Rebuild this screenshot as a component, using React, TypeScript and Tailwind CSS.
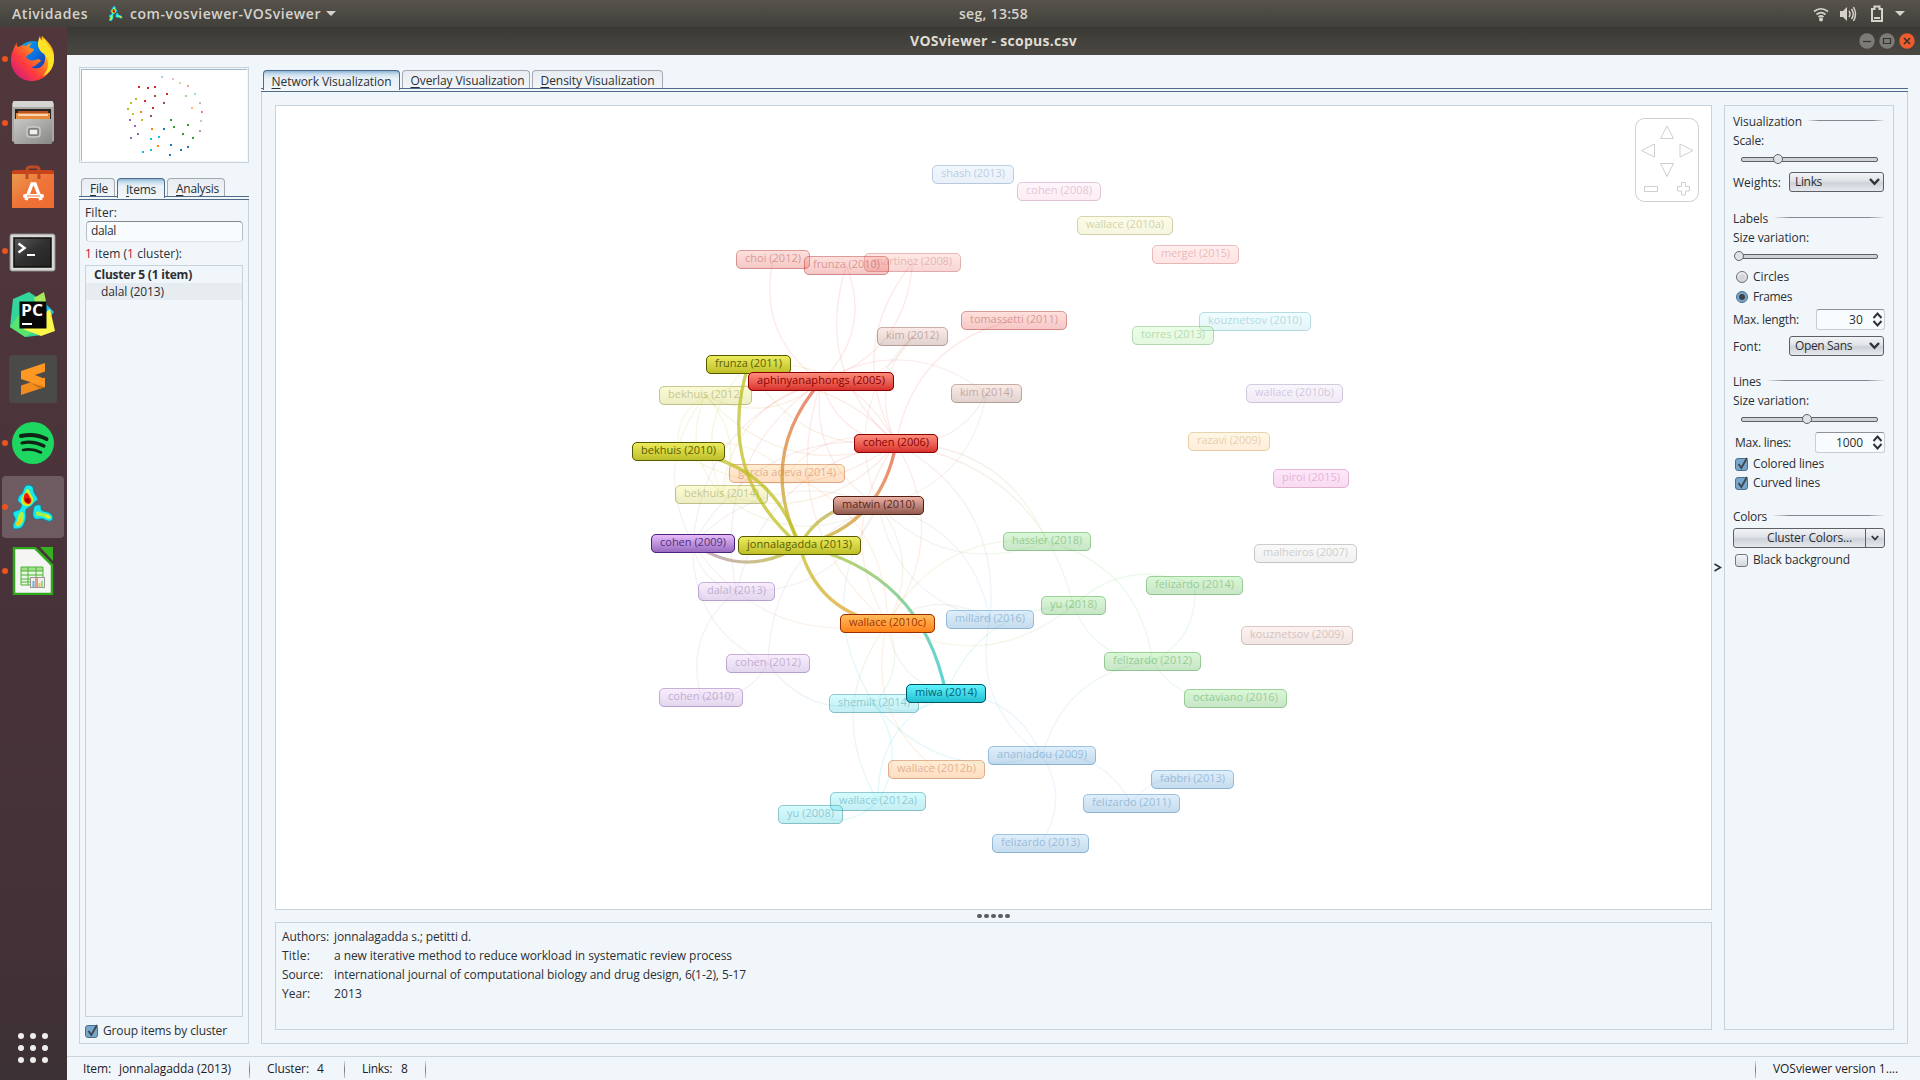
import React, { useLayoutEffect, useRef } from "react";

/* Text whose tracking is adjusted so that it fills a given width. */
function Fit({ w, className = "", children }: { w: number; className?: string; children: React.ReactNode }) {
  const ref = useRef<HTMLSpanElement>(null);
  useLayoutEffect(() => {
    const el = ref.current;
    if (!el) return;
    el.style.letterSpacing = "0px";
    const n = (el.textContent || "").length;
    const natural = el.getBoundingClientRect().width;
    if (n > 0) el.style.letterSpacing = `${(w - natural) / n}px`;
  }, [w, children]);
  return (
    <span ref={ref} className={`inline-block shrink-0 whitespace-pre ${className}`}>
      {children}
    </span>
  );
}

type Tone = { fill: string; ink: string; hex: string; line: string };
const T: Record<string, Tone> = {
  red: { fill: "from-[#ff9080] to-[#d62728]", ink: "text-[#8b0000] border-[#8b0000]", hex: "#d62728", line: "#ec5a48" },
  yellow: { fill: "from-[#efee60] to-[#bcbd22]", ink: "text-[#5a5f00] border-[#565a00]", hex: "#bcbd22", line: "#bfc022" },
  brown: { fill: "from-[#f2b8aa] to-[#8c564b]", ink: "text-[#58261c] border-[#4f2018]", hex: "#8c564b", line: "#c09a7c" },
  purple: { fill: "from-[#ecc0fc] to-[#9467bd]", ink: "text-[#53307c] border-[#4c2480]", hex: "#9467bd", line: "#b48cc8" },
  orange: { fill: "from-[#ffbe5c] to-[#ff7f0e]", ink: "text-[#a03400] border-[#9a2e00]", hex: "#ff7f0e", line: "#f09a30" },
  cyan: { fill: "from-[#62f6ff] to-[#17becf]", ink: "text-[#006375] border-[#005364]", hex: "#17becf", line: "#22c8d4" },
  green: { fill: "from-[#79e46a] to-[#2ca02c]", ink: "text-[#0e7a10] border-[#0e7a10]", hex: "#2ca02c", line: "#70d868" },
  blue: { fill: "from-[#89c7f8] to-[#1f77b4]", ink: "text-[#0b5a9a] border-[#0b5a9a]", hex: "#1f77b4", line: "#78b4ec" },
  lblue: { fill: "from-[#c8e6f8] to-[#aec7e8]", ink: "text-[#5070a0] border-[#4a6c9c]", hex: "#aec7e8", line: "#aec7e8" },
  lpink: { fill: "from-[#ffdff5] to-[#f7b6d2]", ink: "text-[#a0608a] border-[#a0608a]", hex: "#f7b6d2", line: "#f7b6d2" },
  lyellow: { fill: "from-[#f4f4aa] to-[#dbdb8d]", ink: "text-[#7c7c28] border-[#7c7c28]", hex: "#dbdb8d", line: "#dbdb8d" },
  lred: { fill: "from-[#ffc4c0] to-[#ff9896]", ink: "text-[#b05050] border-[#b05050]", hex: "#ff9896", line: "#ff9896" },
  lcyan: { fill: "from-[#c4fbff] to-[#9edae5]", ink: "text-[#3a90a0] border-[#3a90a0]", hex: "#9edae5", line: "#9edae5" },
  lgreen: { fill: "from-[#b8ffa8] to-[#98df8a]", ink: "text-[#3e903a] border-[#3e903a]", hex: "#98df8a", line: "#98df8a" },
  lpurple: { fill: "from-[#ece0fc] to-[#c5b0d5]", ink: "text-[#7d68a0] border-[#7d68a0]", hex: "#c5b0d5", line: "#c5b0d5" },
  lorange: { fill: "from-[#ffe0a0] to-[#ffbb78]", ink: "text-[#b08030] border-[#b08030]", hex: "#ffbb78", line: "#ffbb78" },
  pink: { fill: "from-[#ffa8f4] to-[#e377c2]", ink: "text-[#b04a90] border-[#b04a90]", hex: "#e377c2", line: "#e377c2" },
  gray: { fill: "from-[#ececec] to-[#c7c7c7]", ink: "text-[#707070] border-[#606060]", hex: "#c7c7c7", line: "#c7c7c7" },
  lbrown: { fill: "from-[#fcd4cc] to-[#c49c94]", ink: "text-[#8c6058] border-[#8c6058]", hex: "#c49c94", line: "#c49c94" },
};

type Node = { id: string; x: number; y: number; w: number; tone: string; on?: boolean; dim?: boolean };
const nodes: Node[] = [
  { id: "shash (2013)", x: 932, y: 165, w: 82, tone: "lblue" },
  { id: "cohen (2008)", x: 1017, y: 182, w: 84, tone: "lpink" },
  { id: "wallace (2010a)", x: 1077, y: 216, w: 96, tone: "lyellow" },
  { id: "mergel (2015)", x: 1152, y: 245, w: 87, tone: "lred" },
  { id: "martinez (2008)", x: 864, y: 253, w: 97, tone: "red", dim: true },
  { id: "choi (2012)", x: 736, y: 250, w: 74, tone: "red" },
  { id: "frunza (2010)", x: 804, y: 256, w: 85, tone: "red" },
  { id: "tomassetti (2011)", x: 961, y: 311, w: 106, tone: "red" },
  { id: "kouznetsov (2010)", x: 1199, y: 312, w: 112, tone: "lcyan" },
  { id: "torres (2013)", x: 1132, y: 326, w: 82, tone: "lgreen" },
  { id: "kim (2012)", x: 877, y: 327, w: 71, tone: "brown" },
  { id: "kim (2014)", x: 951, y: 384, w: 71, tone: "brown" },
  { id: "wallace (2010b)", x: 1246, y: 384, w: 97, tone: "lpurple" },
  { id: "bekhuis (2012)", x: 659, y: 386, w: 93, tone: "yellow" },
  { id: "razavi (2009)", x: 1188, y: 432, w: 82, tone: "lorange" },
  { id: "piroi (2015)", x: 1273, y: 469, w: 76, tone: "pink" },
  { id: "garcía adeva (2014)", x: 729, y: 464, w: 116, tone: "orange" },
  { id: "bekhuis (2014)", x: 675, y: 485, w: 93, tone: "yellow" },
  { id: "dalal (2013)", x: 698, y: 582, w: 77, tone: "purple" },
  { id: "cohen (2012)", x: 726, y: 654, w: 84, tone: "purple" },
  { id: "cohen (2010)", x: 659, y: 688, w: 84, tone: "purple" },
  { id: "shemilt (2014)", x: 829, y: 694, w: 90, tone: "cyan" },
  { id: "wallace (2012b)", x: 888, y: 760, w: 97, tone: "orange" },
  { id: "wallace (2012a)", x: 830, y: 792, w: 96, tone: "cyan" },
  { id: "yu (2008)", x: 778, y: 805, w: 65, tone: "cyan" },
  { id: "ananiadou (2009)", x: 988, y: 746, w: 108, tone: "blue" },
  { id: "fabbri (2013)", x: 1151, y: 770, w: 83, tone: "blue" },
  { id: "felizardo (2011)", x: 1083, y: 794, w: 97, tone: "blue" },
  { id: "felizardo (2013)", x: 992, y: 834, w: 97, tone: "blue" },
  { id: "felizardo (2012)", x: 1104, y: 652, w: 97, tone: "green" },
  { id: "octaviano (2016)", x: 1184, y: 689, w: 103, tone: "green" },
  { id: "hassler (2018)", x: 1003, y: 532, w: 88, tone: "green" },
  { id: "felizardo (2014)", x: 1146, y: 576, w: 97, tone: "green" },
  { id: "yu (2018)", x: 1041, y: 596, w: 65, tone: "green" },
  { id: "millard (2016)", x: 946, y: 610, w: 88, tone: "blue" },
  { id: "malheiros (2007)", x: 1254, y: 544, w: 103, tone: "gray" },
  { id: "kouznetsov (2009)", x: 1241, y: 626, w: 112, tone: "lbrown" },
  { id: "frunza (2011)", x: 706, y: 355, w: 85, tone: "yellow", on: true },
  { id: "aphinyanaphongs (2005)", x: 748, y: 372, w: 146, tone: "red", on: true },
  { id: "cohen (2006)", x: 854, y: 434, w: 84, tone: "red", on: true },
  { id: "bekhuis (2010)", x: 632, y: 442, w: 93, tone: "yellow", on: true },
  { id: "matwin (2010)", x: 833, y: 496, w: 91, tone: "brown", on: true },
  { id: "cohen (2009)", x: 651, y: 534, w: 84, tone: "purple", on: true },
  { id: "jonnalagadda (2013)", x: 738, y: 536, w: 123, tone: "yellow", on: true },
  { id: "wallace (2010c)", x: 840, y: 614, w: 95, tone: "orange", on: true },
  { id: "miwa (2014)", x: 906, y: 684, w: 80, tone: "cyan", on: true },
];

const find = (k: string) => nodes.find((n) => n.id.replace(/[ ()]/g, "").startsWith(k))!;

/* Every edge bends to the left of its direction of travel. */
const strong: [string, string][] = [
  ["jonna", "miwa"], ["jonna", "aphin"], ["cohen2006", "jonna"], ["jonna", "frunza2011"],
  ["bekhuis2010", "jonna"], ["jonna", "matwin"], ["jonna", "cohen2009"], ["wallace2010c", "jonna"],
];
const faint: [string, string][] = [
  ["aphin", "choi"], ["frunza2010", "aphin"], ["cohen2006", "frunza2010"], ["martinez", "aphin"],
  ["cohen2006", "martinez"], ["kim2012", "aphin"], ["matwin", "kim2012"], ["cohen2006", "kim2012"],
  ["cohen2006", "tomass"], ["aphin", "kim2014"], ["kim2014", "matwin"], ["kim2014", "cohen2006"],
  ["cohen2006", "aphin"], ["matwin", "aphin"], ["cohen2009", "aphin"], ["dalal", "aphin"],
  ["wallace2010c", "aphin"], ["cohen2006", "yu2018"], ["cohen2006", "hassler"], ["hassler", "matwin"],
  ["wallace2010c", "hassler"], ["yu2018", "wallace2010c"], ["miwa", "yu2018"], ["wallace2010c", "millard"],
  ["millard", "matwin"], ["cohen2006", "millard"], ["ananiadou", "millard"], ["matwin", "millard"],
  ["miwa", "ananiadou"], ["ananiadou", "shemilt"], ["ananiadou", "felizardo2012"], ["ananiadou", "felizardo2013"],
  ["ananiadou", "felizardo2011"], ["felizardo2011", "fabbri"], ["octaviano", "felizardo2012"],
  ["felizardo2014", "felizardo2012"], ["yu2018", "felizardo2014"], ["felizardo2012", "yu2018"],
  ["hassler", "felizardo2012"], ["shemilt", "wallace2012a"], ["wallace2012a", "miwa"],
  ["wallace2012a", "wallace2010c"], ["wallace2012a", "yu2008"], ["miwa", "shemilt"],
  ["wallace2010c", "shemilt"], ["miwa", "wallace2010c"], ["wallace2012b", "wallace2010c"],
  ["shemilt", "matwin"], ["shemilt", "cohen2012"], ["cohen2012", "cohen2010"], ["cohen2012", "cohen2009"],
  ["cohen2012", "matwin"], ["cohen2010", "dalal"], ["wallace2010c", "cohen2009"], ["matwin", "dalal"],
  ["dalal", "cohen2009"], ["cohen2009", "matwin"], ["cohen2009", "cohen2006"], ["dalal", "cohen2006"],
  ["bekhuis2014", "bekhuis2012"], ["bekhuis2012", "bekhuis2014"], ["bekhuis2010", "bekhuis2012"],
  ["aphin", "bekhuis2012"], ["bekhuis2012", "cohen2006"], ["cohen2006", "bekhuis2012"],
  ["bekhuis2014", "aphin"], ["cohen2006", "bekhuis2014"], ["garcía", "cohen2006"], ["cohen2006", "bekhuis2010"],
  ["frunza2011", "cohen2006"], ["cohen2006", "frunza2011"], ["matwin", "bekhuis2014"], ["cohen2009", "bekhuis2012"],
  ["bekhuis2014", "frunza2011"], ["garcía", "wallace2010c"], ["cohen2006", "wallace2010c"],
  ["matwin", "wallace2010c"], ["bekhuis2010", "garcía"], ["wallace2010c", "cohen2006"],
];

function edgePath(a: Node, b: Node) {
  const ax = a.x + a.w / 2, ay = a.y + 9.5, bx = b.x + b.w / 2, by = b.y + 9.5;
  const cx = (ax + bx) / 2 + (by - ay) * 0.33, cy = (ay + by) / 2 - (bx - ax) * 0.33;
  return { ax, ay, bx, by, d: `M${ax} ${ay}Q${cx} ${cy} ${bx} ${by}` };
}

function Edges({ list, name, width, opacity }: { list: [string, string][]; name: string; width: number; opacity: number }) {
  return (
    <svg className="absolute inset-0" width="1920" height="1080" fill="none">
      {list.map(([s, t], i) => {
        const a = find(s), b = find(t);
        const e = edgePath(a, b);
        return (
          <g key={i}>
            <linearGradient id={name + i} gradientUnits="userSpaceOnUse" x1={e.ax} y1={e.ay} x2={e.bx} y2={e.by}>
              <stop offset="0" stopColor={T[a.tone].line} />
              <stop offset="1" stopColor={T[b.tone].line} />
            </linearGradient>
            <path d={e.d} stroke={`url(#${name + i})`} strokeWidth={width} opacity={opacity} />
          </g>
        );
      })}
    </svg>
  );
}

function NodeBox({ n }: { n: Node }) {
  const t = T[n.tone];
  const fo = n.on ? "opacity-100" : n.dim ? "opacity-[0.2]" : "opacity-[0.27]";
  const io = n.on ? "opacity-100" : n.dim ? "opacity-[0.2]" : "opacity-[0.3]";
  return (
    <div className="absolute h-[19px]" style={{ left: n.x, top: n.y, width: n.w }}>
      <div className={`absolute inset-0 rounded-[5px] bg-linear-to-b ${t.fill} ${fo}`} />
      <div className={`absolute inset-0 rounded-[5px] border ${t.ink} ${io}`} />
      <div className={`absolute inset-x-0 top-0 flex h-[16px] items-center pl-[9px] font-['Open_Sans'] text-[11px] ${t.ink} ${io}`}>
        <Fit w={n.w - 18}>{n.id}</Fit>
      </div>
    </div>
  );
}

function Tab({ text, w, box, active }: { text: string; w: number; box: string; active?: boolean }) {
  const look = active
    ? "z-10 h-[20px] border-[#4f6b88] bg-[linear-gradient(#8bb4d6,#c6dcec_3px,#e2ecf4_6px,#f0f5fa_9px,#e9f1f7_10px,#f1f6fa_19px)]"
    : "h-[18px] border-[#a5aab0] bg-linear-to-b from-[#e8edf3] to-[#f1f5f9]";
  return (
    <div className={`flex items-center justify-center rounded-t-[4px] border border-b-0 pt-[2px] ${look} ${box}`}>
      <Fit w={w}>
        <span className="underline underline-offset-2">{text[0]}</span>
        {text.slice(1)}
      </Fit>
    </div>
  );
}

const TabRule = () => <div className="h-[4px] shrink-0 border-y border-[#4f6b88] bg-[#f1f6fa]" />;

function Check({ on }: { on?: boolean }) {
  return (
    <div className={`relative h-[13px] w-[13px] shrink-0 rounded-[3px] border ${on ? "border-[#4a6e8e] bg-[#78a7cc]" : "border-[#73777c] bg-linear-to-b from-[#f4f5f7] to-[#d4d7dc]"}`}>
      {on && (
        <svg className="absolute -left-px -top-[2px]" width="15" height="14" fill="none">
          <path d="M3.500 7l2.800 4L12 1" stroke="#3d4751" strokeWidth="1.900" />
        </svg>
      )}
    </div>
  );
}

function Radio({ on }: { on?: boolean }) {
  return (
    <div className={`flex h-[12px] w-[12px] shrink-0 items-center justify-center rounded-full border ${on ? "border-[#4a6e8e] bg-[#78a7cc]" : "border-[#6b6f74] bg-linear-to-b from-[#f0f1f3] to-[#d0d3d8]"}`}>
      {on ? <i className="h-[6px] w-[6px] rounded-full bg-[#3c4248]" /> : <i className="h-[6px] w-[6px] rounded-full bg-[#d3d6da]" />}
    </div>
  );
}

function Section({ text, w }: { text: string; w: number }) {
  return (
    <div className="flex h-[18px] items-center gap-[5px]">
      <Fit w={w}>{text}</Fit>
      <i className="mb-[3px] h-px flex-1 bg-[linear-gradient(90deg,#f1f6fa,#84898f_15%,#84898f_85%,#f1f6fa)]" />
    </div>
  );
}

function Slider({ full, knob }: { full?: boolean; knob: string }) {
  return (
    <div className={`relative mt-[3px] flex h-[12px] items-center pr-[7px] ${full ? "pl-[3px]" : "pl-[8px]"}`}>
      <i className="h-[5px] w-full rounded-[2px] border border-[#5d6166] bg-[#cfd3d8]" />
      <i className={`absolute top-[1px] h-[10px] w-[10px] rounded-full border border-[#62666b] bg-[#dfe3e8] ${knob}`} />
    </div>
  );
}

function Combo({ text, w }: { text: string; w: number }) {
  return (
    <div className="ml-auto mr-px flex h-[20px] w-[95px] items-center justify-between rounded-[3px] border border-[#5d6166] bg-[linear-gradient(#f2f4f6,#dfe2e7_45%,#cdd2d9_55%,#e6e9ed)] pl-[5px] pr-[3px]">
      <Fit w={w}>{text}</Fit>
      <svg width="11" height="8" fill="none"><path d="M1 1l4.500 4.800L10 1" stroke="#303336" strokeWidth="2.400" /></svg>
    </div>
  );
}

function Spinner({ text, w, box }: { text: string; w: number; box: string }) {
  return (
    <div className={`ml-auto flex h-[21px] items-center justify-end rounded-[3px] border border-[#c9ced4] border-t-[#8e9399] bg-[#f9fcff] ${box}`}>
      <Fit w={w}>{text}</Fit>
      <svg className="ml-[9px] mr-px" width="11" height="17" fill="none"><path d="M1.500 7L5.500 2.500 9.500 7M1.500 10L5.500 14.500 9.500 10" stroke="#303336" strokeWidth="2" /></svg>
    </div>
  );
}

const VosBlob = () => (
  <>
    <path d="M15 0C18 0 20 1 20.500 4C20.500 9 24 11 25 14C25 16 22 16 21 18C19 22 15 22 13 24.500C12 28 14 31 12.500 35C11 39 10 42 8 43C5 44 0 45 0 42C-.5 38 3 36 2 33C1 31-1 29 .5 27C3 25 6 26 7 24C8 22 9 21 8 19C6 17 4 16 5 14C5 10 9 10 10 6C11 3 12 0 15 0z" fill="#16e6f0" stroke="#0d7f98" strokeWidth=".9" />
    <path d="M21 22C22 20 26 19 27.500 20.500C29 22 27 24 29 25.500C32 27 35 26 38 29C40 31 41 34 38 36C35 37 33 35 30 34C27 33 24 36 21 33C19 31 20 25 21 22z" fill="#16e6f0" stroke="#0d7f98" strokeWidth=".9" />
    <path d="M15 4C17 5 17 9 19 11C21 14 21 17 18 19C15 23 9 21 8.500 17C7 14 10 10 12 8C13 6 13 3 15 4z" fill="#b8f83a" />
    <path d="M14 7C16 8 17 11 18.500 13C20 16 18 20 15 20C11 20 9 16 10 13C11 10 12 7 14 7z" fill="#ffc400" />
    <path d="M14 8C16 9 16 12 18 14C19 17 17 19 15 19C12 18 10 15 11 12C11 10 12 8 14 8z" fill="#f41606" />
    <path d="M14 13C16 13 17 15 17 17C15 19 12 17 12 15C12 14 13 13 14 13z" fill="#9c0000" />
    <path d="M8 27C10 26 11 28 11 31C11 35 9 40 6 41C3 42 2 40 4 36C5 33 5 28 8 27z" fill="#a4f44a" />
    <path d="M8 33C10 34 8 39 5 40C2 41 3 38 5 36C6 35 6 33 8 33z" fill="#ffc810" />
    <path d="M23 27C25 26 27 27 29 28C32 28 36 29 38 32C38 35 34 34 31 32C28 30 24 32 23 30z" fill="#a0f050" />
    <path d="M33 30C35 29 37 31 37 33C35 34 33 32 33 30z" fill="#f6ea20" />
  </>
);

const icons: { dot?: boolean; on?: boolean; art: React.ReactNode }[] = [
  {
    dot: true,
    art: (
      <svg width="48" height="48" viewBox="0 0 48 48" className="mt-px">
        <defs>
          <linearGradient id="ffo" x1="1" y1="0" x2="0" y2="1"><stop offset="0" stopColor="#ffd526" /><stop offset=".35" stopColor="#ff9a16" /><stop offset=".65" stopColor="#ff3b3e" /><stop offset="1" stopColor="#c0148f" /></linearGradient>
          <linearGradient id="ffb" x1="0" y1="0" x2="1" y2="1"><stop offset="0" stopColor="#00b5f2" /><stop offset=".5" stopColor="#0a6ee0" /><stop offset="1" stopColor="#3a1a78" /></linearGradient>
        </defs>
        <circle cx="24" cy="22" r="17" fill="url(#ffb)" />
        <path d="M8 6c-1 3 0 4 1 5 2-1 5-2 8-1 2-2 4-3 6-3-2 2-3 3-2 5l4 1c-1 4-6 5-8 8 2 3 5 4 9 3 3-1 5-1 6 1-3 2-6 6-10 6 7 4 14-1 14-8 1-5-2-8-4-9-1-5 0-9 1-14 7 7 13 12 12 23-1 12-10 22-22 22S2 36 2 24c0-7 3-12 6-18z" fill="url(#ffo)" />
        <path d="M31 0c-4 8-2 14 4 18 6 6 5 16-1 22 7-3 11-9 11-17 0-10-7-12-9-20-3 2-4 3-5-3z" fill="#ffe226" />
      </svg>
    ),
  },
  {
    dot: true,
    art: (
      <svg width="48" height="48" viewBox="0 0 48 48">
        <linearGradient id="cab" x1="0" y1="0" x2="1" y2="1"><stop offset="0" stopColor="#c9c9c7" /><stop offset="1" stopColor="#878785" /></linearGradient>
        <rect x="3" y="3" width="42" height="40" rx="2" fill="#aaa9a6" />
        <rect x="4" y="2" width="40" height="6" rx="1" fill="#d5d5d3" />
        <rect x="6" y="10" width="36" height="10" fill="#2a2521" />
        <path d="M9 12h30v8H9z" fill="#b5542a" /><path d="M7 14h34v7H7z" fill="#e88a38" /><path d="M9 16h30" stroke="#fff0e0" strokeWidth="1.500" />
        <rect x="5" y="20" width="38" height="25" rx="1" fill="url(#cab)" />
        <rect x="18" y="28" width="13" height="10" rx="2" fill="#a5a5a3" stroke="#d9d9d7" />
        <rect x="20" y="30" width="9" height="6" rx="1" fill="#eee" stroke="#555" />
      </svg>
    ),
  },
  {
    art: (
      <svg width="48" height="48" viewBox="0 0 48 48" fill="none">
        <linearGradient id="bag" x1="0" y1="0" x2="1" y2="1"><stop offset="0" stopColor="#e9994f" /><stop offset=".5" stopColor="#ee7437" /><stop offset="1" stopColor="#ee6b30" /></linearGradient>
        <path d="M3 8l3-1h36l3 1v37H3z" fill="#c8431a" />
        <path d="M3 11h42v34H3z" fill="url(#bag)" />
        <path d="M18 16V7q0-3 3-3h6q3 0 3 3v9" stroke="#c04a20" strokeWidth="3" />
        <path d="M17 37l6-16h3l6 16" stroke="#fff" strokeWidth="3.500" />
        <path d="M16 33h17" stroke="#fff" strokeWidth="4" strokeLinecap="round" /><path d="M18 33h13" stroke="#ee7437" />
      </svg>
    ),
  },
  {
    dot: true,
    art: (
      <svg width="48" height="48" viewBox="0 0 48 48" fill="none">
        <linearGradient id="term" x1="0" y1="0" x2="1" y2="1"><stop stopColor="#5a5a5a" /><stop offset=".5" stopColor="#303030" /><stop offset="1" stopColor="#222" /></linearGradient>
        <rect x="1" y="7" width="45" height="37" rx="2" fill="#d8d8d6" stroke="#8a8a88" />
        <rect x="5" y="11" width="37" height="29" fill="url(#term)" stroke="#0e0e0e" strokeWidth="1.500" />
        <path d="M9.500 16.500l6 4.500-6 4.500" stroke="#fff" strokeWidth="2.500" /><path d="M18 28h8" stroke="#fff" strokeWidth="2" />
      </svg>
    ),
  },
  {
    art: (
      <svg width="48" height="48" viewBox="0 0 48 48">
        <path d="M4 8L20 1l9 6 4 37-16 2L1 36z" fill="#32d59a" />
        <path d="M1 36l10-14 12 20-7 4z" fill="#5be26f" />
        <path d="M25 7l10-6 3 14-10 4z" fill="#a8e85a" />
        <path d="M36 12l9 9-6 8-6-6z" fill="#16c2f0" />
        <path d="M14 38l27-20 5 22-14 5z" fill="#fcf84a" />
        <rect x="10.500" y="10.500" width="27" height="27" fill="#080808" />
        <path d="M13 33h10" stroke="#fff" strokeWidth="2" />
        <text x="12" y="25" fontFamily="Open Sans" fontWeight="700" fontSize="16" fill="#fff" textLength="22" lengthAdjust="spacingAndGlyphs">PC</text>
      </svg>
    ),
  },
  {
    art: (
      <svg width="48" height="48" viewBox="0 0 48 48">
        <rect width="48" height="48" rx="3" fill="#4a4a49" />
        <path d="M12 30.500l24-8V32L12 40z" fill="#f28c1c" />
        <path d="M12 16l24-8v8.500l-10 3.500 10 4v8l-24-8z" fill="#ff9822" />
        <path d="M22 28l14 4-5 2z" fill="#cf7412" />
      </svg>
    ),
  },
  {
    dot: true,
    art: (
      <svg width="48" height="48" viewBox="0 0 48 48" fill="none" stroke="#102316" strokeLinecap="round">
        <circle cx="24" cy="24" r="21" fill="#1ed760" stroke="none" />
        <path d="M12 17q14-3 25.500 3" strokeWidth="4" /><path d="M13 24q11-2.500 22 3" strokeWidth="3.200" /><path d="M14 31q9.500-2 18 2.500" strokeWidth="2.600" />
      </svg>
    ),
  },
  {
    dot: true,
    on: true,
    art: <svg width="48" height="48" viewBox="-4 -2 48 48"><VosBlob /></svg>,
  },
  {
    dot: true,
    art: (
      <svg width="48" height="48" viewBox="0 0 48 48" fill="none">
        <path d="M5 1h21l17 17v29H5z" fill="#f5f5f4" stroke="#30a81c" strokeWidth="2.500" />
        <path d="M31 0h13v14z" fill="#35b020" />
        <path d="M12 20h22v18H12z" fill="#e9f7e4" />
        <path d="M12 20h22v4H12z" fill="#a5df90" />
        <path d="M12 20h22v18H12zM12 24h22M12 28h22M12 32h22M12 35h22M19 20v18M27 20v18" stroke="#4cb436" />
        <rect x="21.500" y="30.500" width="14" height="10" fill="#eee" stroke="#999" />
        <path d="M24.500 40v-6" stroke="#6bb0d8" strokeWidth="2" /><path d="M27.500 40v-9" stroke="#e89a80" strokeWidth="3" /><path d="M30.500 40v-4" stroke="#f3c34a" strokeWidth="2" /><path d="M33 40v-6" stroke="#9ad88a" strokeWidth="2" />
      </svg>
    ),
  },
];

function Dock() {
  return (
    <div className="flex w-[67px] shrink-0 flex-col bg-[linear-gradient(#51373b,#49333a_50%,#443138_85%,#3c3134)]">
      {icons.map((ic, i) => (
        <div key={i} className="relative flex h-[64px] items-center justify-center pr-px">
          {ic.on && <i className="absolute left-[2px] top-px h-[62px] w-[62px] rounded-[4px] bg-white/20" />}
          {ic.dot && <i className="absolute left-[2px] top-[29px] h-[6px] w-[6px] rounded-full bg-[#e95420]" />}
          <div className="relative">{ic.art}</div>
        </div>
      ))}
      <div className="mb-[17px] ml-[18px] mt-auto grid w-[30px] grid-cols-3 gap-[6px]">
        {Array.from({ length: 9 }, (_, i) => <i key={i} className="h-[6px] w-[6px] rounded-full bg-[#eeeeec]" />)}
      </div>
    </div>
  );
}

function TopBar() {
  return (
    <div className="flex h-[27px] shrink-0 items-center bg-linear-to-b from-[#57544c] to-[#403f3a] font-['Open_Sans'] text-[14px] font-semibold text-[#d6d3cc]">
      <Fit w={76} className="ml-[12px]">Atividades</Fit>
      <svg className="ml-[21px]" width="14" height="16" viewBox="0 0 42 46"><VosBlob /></svg>
      <Fit w={191} className="ml-[7px]">com-vosviewer-VOSviewer</Fit>
      <svg className="ml-[5px]" width="10" height="5"><path d="M0 0h10L5 5z" fill="#d6d3cc" /></svg>
      <div className="ml-[623px]"><Fit w={69}>seg, 13:58</Fit></div>
      <div className="ml-auto mr-[15px] flex items-center text-[#d6d3cc]">
        <svg width="16" height="16" viewBox="0 0 16 16" fill="none" stroke="currentColor" strokeWidth="1.700">
          <path d="M1 5.500q7-5.500 14 0M3.500 8.500q4.500-3.800 9 0M5.500 11q2.500-2 5 0" /><circle cx="8" cy="13.500" r="2" fill="currentColor" stroke="none" />
        </svg>
        <svg className="ml-[11px]" width="17" height="16" viewBox="0 0 17 16" fill="none" stroke="currentColor" strokeWidth="1.500">
          <path d="M0 5h3l4-4v14L3 11H0z" fill="currentColor" stroke="none" /><path d="M9 5q2 3 0 6M11.500 3q3.500 5 0 10M13.500 1q4 7 0 14" />
        </svg>
        <svg className="ml-[14px]" width="12" height="17" viewBox="0 0 12 17" fill="none"><path d="M1 4h2.500V1.500h5V4H11v12H1z" stroke="currentColor" strokeWidth="2" /><path d="M3 13h6" stroke="currentColor" strokeWidth="2" /></svg>
        <svg className="ml-[12px]" width="10" height="5"><path d="M0 0h10L5 5z" fill="currentColor" /></svg>
      </div>
    </div>
  );
}

function TitleBar() {
  return (
    <div className="flex h-[28px] shrink-0 items-center bg-linear-to-b from-[#3a3934] to-[#4a4841] pr-[5px] font-['Open_Sans'] text-[14px] font-bold text-[#dfdbd2]">
      <Fit w={167} className="ml-[843px]">VOSviewer - scopus.csv</Fit>
      <div className="ml-auto flex gap-[4px]">
        {[0, 1, 2].map((i) => (
          <svg key={i} width="16" height="16" fill="none" stroke="#34332e" strokeWidth="1.200">
            <circle cx="8" cy="8" r="7.700" stroke="none" fill={i === 2 ? "#ee5b2d" : "#7d7b75"} />
            {i === 0 && <path d="M4 8.500h8" />}
            {i === 1 && <path d="M4.500 5.500h7v5h-7z" />}
            {i === 2 && <path d="M5 5l6 6M11 5l-6 6" strokeWidth="1.600" />}
          </svg>
        ))}
      </div>
    </div>
  );
}

function Overview() {
  return (
    <div className="h-[96px] shrink-0 border border-[#c9d3dc] p-px">
      <div className="relative h-full border-l border-t border-[#a3bccd] bg-white">
        {nodes.map((n) => (
          <i key={n.id} className="absolute h-[2px] w-[2px]"
            style={{ left: Math.round(45 + (n.x + n.w / 2 - 678.5) * 0.117), top: Math.round(6 + (n.y - 165) * 0.1165), background: T[n.tone].hex }} />
        ))}
      </div>
    </div>
  );
}

function LeftPanel() {
  return (
    <div className="ml-[12px] flex w-[170px] flex-col pb-[12px] pt-[12px]">
      <Overview />
      <div className="mt-[15px] flex h-[18px] shrink-0 items-start pl-[2px]">
        <Tab text="File" w={18} box="w-[34px] pl-[2px]" />
        <Tab text="Items" w={30} box="ml-[2px] w-[48px]" active />
        <Tab text="Analysis" w={43} box="ml-[2px] w-[58px] pl-[3px]" />
      </div>
      <TabRule />
      <div className="flex flex-1 flex-col border border-t-0 border-[#c9d3dc] px-[5px] pb-[3px]">
        <div className="mt-[3px] h-[18px] leading-[19px]"><Fit w={32}>Filter:</Fit></div>
        <div className="ml-px h-[21px] rounded-[4px] border border-[#dbe1e6] border-x-[#b7bdc3] border-t-[#84898e] bg-[#f9fcff] pl-[4px] leading-[18px]"><Fit w={25}>dalal</Fit></div>
        <div className="mt-[3px] h-[18px] leading-[18px]"><Fit w={97}><span className="text-[#c8102e]">1</span> item (<span className="text-[#c8102e]">1</span> cluster):</Fit></div>
        <div className="mt-[2px] flex-1 border border-[#c9d3dc]">
          <div className="h-[17px] pl-[8px] font-bold leading-[18px]"><Fit w={98}>Cluster 5 (1 item)</Fit></div>
          <div className="h-[17px] bg-[#e7ecf0] pl-[15px] leading-[17px]"><Fit w={63}>dalal (2013)</Fit></div>
        </div>
        <div className="mt-[5px] flex h-[18px] shrink-0 items-center gap-[5px]"><Check on /><Fit w={124}>Group items by cluster</Fit></div>
      </div>
    </div>
  );
}

function NavPad() {
  return (
    <svg className="absolute right-[11px] top-[12px]" width="65" height="85" fill="none" stroke="#cfcfcf">
      <rect x=".5" y=".5" width="63" height="83" rx="9" />
      <path d="M32 8l-6.500 12.500h13zM32 58.500l-6.500-13h13zM6.500 32.500l13-6.500v13zM58 32.500l-13-6.500v13zM9.500 68.500h13v5h-13zM46.500 64.500h4v4h4v4.500h-4v4h-4v-4h-4v-4.500h4z" />
    </svg>
  );
}

function Canvas() {
  return (
    <div className="relative h-[805px] overflow-hidden border border-[#c9d3dc] bg-white">
      <div className="absolute -left-[276px] -top-[106px] h-[1080px] w-[1920px]">
        <Edges list={faint} name="f" width={1.3} opacity={0.13} />
        {nodes.filter((n) => !n.on).map((n) => <NodeBox key={n.id} n={n} />)}
        <Edges list={strong} name="s" width={3.3} opacity={0.75} />
        {nodes.filter((n) => n.on).map((n) => <NodeBox key={n.id} n={n} />)}
      </div>
      <NavPad />
    </div>
  );
}

const details: [string, number, string, number][] = [
  ["Authors:", 47, "jonnalagadda s.; petitti d.", 137],
  ["Title:", 28, "a new iterative method to reduce workload in systematic review process", 398],
  ["Source:", 41, "international journal of computational biology and drug design, 6(1-2), 5-17", 412],
  ["Year:", 28, "2013", 28],
];

function Options() {
  return (
    <div className="h-[925px] w-[170px] shrink-0 border border-[#c9d3dc] pl-[8px] pr-[8px] pt-[7px]">
      <Section text="Visualization" w={69} />
      <div className="mt-px flex h-[18px] items-center"><Fit w={31}>Scale:</Fit></div>
      <Slider knob="left-[40px]" />
      <div className="mt-[7px] flex h-[22px] items-start"><span className="pt-[3px]"><Fit w={48}>Weights:</Fit></span><Combo text="Links" w={27} /></div>
      <div className="mt-[16px]"><Section text="Labels" w={35} /></div>
      <div className="mt-px flex h-[18px] items-center"><Fit w={76}>Size variation:</Fit></div>
      <Slider full knob="left-[1px]" />
      <div className="mt-[6px] flex h-[18px] items-center pl-[3px]"><Radio /><Fit w={36} className="ml-[5px]">Circles</Fit></div>
      <div className="mt-[2px] flex h-[18px] items-center pl-[3px]"><Radio on /><Fit w={39} className="ml-[5px]">Frames</Fit></div>
      <div className="mt-[3px] flex h-[21px] items-center"><Fit w={66}>Max. length:</Fit><Spinner text="30" w={14} box="w-[69px]" /></div>
      <div className="mt-[6px] flex h-[21px] items-start"><span className="pt-[3px]"><Fit w={28}>Font:</Fit></span><Combo text="Open Sans" w={57} /></div>
      <div className="mt-[16px]"><Section text="Lines" w={28} /></div>
      <div className="mt-px flex h-[18px] items-center"><Fit w={76}>Size variation:</Fit></div>
      <Slider knob="left-[69px]" />
      <div className="mt-[7px] flex h-[21px] items-center pl-[2px]"><Fit w={56}>Max. lines:</Fit><Spinner text="1000" w={27} box="w-[70px]" /></div>
      <div className="mt-[2px] flex h-[18px] items-center pl-[2px]"><Check on /><Fit w={71} className="ml-[5px]">Colored lines</Fit></div>
      <div className="mt-px flex h-[18px] items-center pl-[2px]"><Check on /><Fit w={67} className="ml-[5px]">Curved lines</Fit></div>
      <div className="mt-[16px]"><Section text="Colors" w={34} /></div>
      <div className="mt-[2px] flex h-[20px] items-center rounded-[3px] border border-[#5d6166] bg-[linear-gradient(#f2f4f6,#dfe2e7_45%,#cdd2d9_55%,#e6e9ed)]">
        <Fit w={85} className="ml-[33px]">Cluster Colors...</Fit>
        <i className="ml-auto h-full w-px bg-[#5d6166]" />
        <span className="flex w-[18px] justify-center"><svg width="8" height="6" fill="none"><path d="M.8 1l3.200 3.500L7.200 1" stroke="#303336" strokeWidth="1.800" /></svg></span>
      </div>
      <div className="mt-[3px] flex h-[18px] items-center pl-[2px]"><Check /><Fit w={97} className="ml-[5px]">Black background</Fit></div>
    </div>
  );
}

function MainPanel() {
  return (
    <div className="ml-[12px] mr-[12px] flex min-w-0 flex-1 flex-col pb-[12px] pt-[15px]">
      <div className="flex h-[18px] shrink-0 items-start pl-[2px]">
        <Tab text="Network Visualization" w={120} box="w-[137px]" active />
        <Tab text="Overlay Visualization" w={114} box="ml-[2px] w-[128px] pl-[3px]" />
        <Tab text="Density Visualization" w={114} box="ml-[2px] w-[131px]" />
      </div>
      <TabRule />
      <div className="flex flex-1 border border-t-0 border-[#c9d3dc] pl-[13px] pr-[13px] pt-[13px]">
        <div className="flex w-[1437px] shrink-0 flex-col">
          <Canvas />
          <div className="flex h-[12px] items-center justify-center gap-[2.400px]">
            {[0, 1, 2, 3, 4].map((i) => <i key={i} className="h-[4px] w-[4.500px] rounded-full bg-[#5b5f64]" />)}
          </div>
          <div className="h-[108px] border border-[#c9d3dc] pl-[6px] pt-[4px]">
            {details.map(([k, kw, v, vw]) => (
              <div key={k} className="flex h-[19px] items-center">
                <div className="w-[52px]"><Fit w={kw}>{k}</Fit></div>
                <Fit w={vw}>{v}</Fit>
              </div>
            ))}
          </div>
        </div>
        <div className="flex h-[924px] flex-1 items-center justify-center">
          <svg width="8" height="9" fill="none"><path d="M.5 1l6 3.500-6 3.500" stroke="#303336" strokeWidth="1.600" /></svg>
        </div>
        <Options />
      </div>
    </div>
  );
}

const Sep = ({ className }: { className: string }) => (
  <i className={`h-[17px] w-px shrink-0 bg-[linear-gradient(#d5dade,#777b80_50%,#c0c4c8)] ${className}`} />
);

function StatusBar() {
  return (
    <div className="flex h-[24px] shrink-0 items-center border-t border-[#c9d3dc] pl-[16px] pt-px text-[#1e2124]">
      <Fit w={28}>Item:</Fit>
      <Fit w={112} className="ml-[8px]">jonnalagadda (2013)</Fit>
      <Sep className="ml-[18px]" />
      <Fit w={42} className="ml-[17px]">Cluster:</Fit>
      <Fit w={7} className="ml-[8px]">4</Fit>
      <Sep className="ml-[20px]" />
      <Fit w={30} className="ml-[17px]">Links:</Fit>
      <Fit w={7} className="ml-[9px]">8</Fit>
      <Sep className="ml-[17px]" />
      <Sep className="ml-auto" />
      <Fit w={125} className="ml-[17px] mr-[22px]">VOSviewer version 1....</Fit>
    </div>
  );
}

export default function App() {
  return (
    <div className="flex h-[1080px] w-[1920px] flex-col overflow-hidden bg-[#f1f6fa] font-['Open_Sans','Noto_Sans',sans-serif] text-[12px] leading-[16px] text-[#2b2f33]">
      <TopBar />
      <div className="flex flex-1">
        <Dock />
        <div className="flex min-w-0 flex-1 flex-col">
          <TitleBar />
          <div className="flex flex-1">
            <LeftPanel />
            <MainPanel />
          </div>
          <StatusBar />
        </div>
      </div>
    </div>
  );
}
